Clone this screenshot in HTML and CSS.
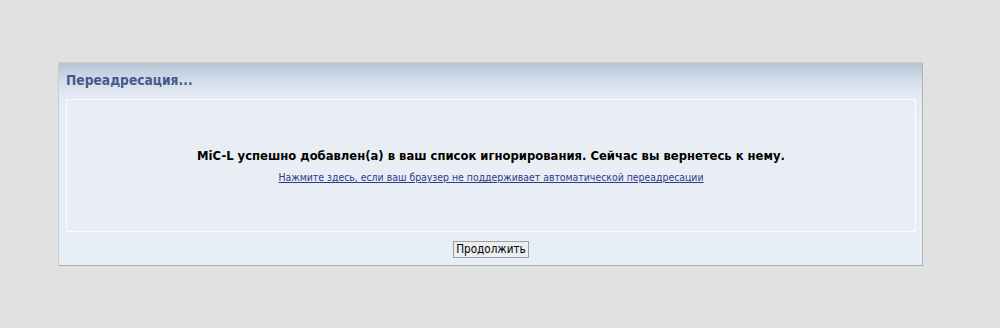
FILE: index.html
```html
<!DOCTYPE html>
<html lang="ru">
<head>
<meta charset="utf-8">
<title>Переадресация...</title>
<link rel="stylesheet" href="styles.css">
</head>
<body>
<div class="panel">
  <div class="panel-head">Переадресация...</div>
  <div class="panel-body">
    <div class="message">
      <div class="msg-main">MiC-L успешно добавлен(а) в ваш список игнорирования. Сейчас вы вернетесь к нему.</div>
      <a class="msg-link" href="#">Нажмите здесь, если ваш браузер не поддерживает автоматической переадресации</a>
    </div>
    <div class="actions">
      <button class="btn" type="button">Продолжить</button>
    </div>
  </div>
</div>
</body>
</html>
```
FILE: styles.css
```css
html, body {
  margin: 0;
  padding: 0;
}
body {
  background: #e1e1e1;
  font-family: "DejaVu Sans Condensed", "DejaVu Sans", Verdana, sans-serif;
  color: #000;
}
.panel {
  margin: 62px 0 0 58px;
  width: 863px;
  height: 202px;
  border: 1px solid #c9cdd2;
  border-right-color: #b0b4b8;
  border-bottom-color: #b0b4b8;
  background: linear-gradient(to bottom, #b7c4d7 0px, #d3dde9 18px, #e5ebf3 34px, #e8eef5 60px, #e8eef5 100%);
}
.panel-head {
  height: 36px;
  box-sizing: border-box;
  padding: 8px 0 0 7px;
  font-size: 13.7px;
  font-weight: bold;
  color: #46598c;
  line-height: 18px;
}
.panel-body {
  padding: 0 6px 0 7px;
}
.message {
  border: 1px solid #fbfcfe;
  background: #e9edf4;
  display: flex;
  flex-direction: column;
  align-items: center;
  padding-top: 48px;
  height: 83px;
}
.msg-main {
  font-size: 12.9px;
  font-weight: bold;
  line-height: 16px;
}
.msg-link {
  margin-top: 7px;
  font-size: 10.4px;
  line-height: 13px;
  color: #2c3a8c;
  text-decoration: underline;
}
.actions {
  display: flex;
  justify-content: center;
  padding-top: 9px;
}
.btn {
  font-family: "DejaVu Sans Condensed", "DejaVu Sans", Verdana, sans-serif;
  font-size: 11.6px;
  line-height: 13px;
  padding: 1px 2px;
  border: 1px solid #9aa0a6;
  background: #eceef1;
  color: #000;
  border-radius: 0;
}
```
